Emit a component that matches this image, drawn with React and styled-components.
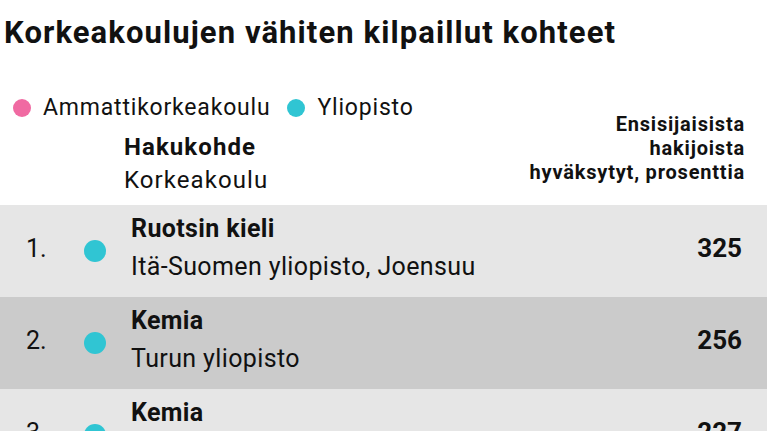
import React from 'react';
import styled, { createGlobalStyle } from 'styled-components';

const GlobalStyle = createGlobalStyle`
  html, body {
    margin: 0;
    padding: 0;
    background: #fff;
    font-family: Roboto, "Liberation Sans", sans-serif;
    color: #111;
  }
`;

const Page = styled.div`
  width: 767px;
  height: 431px;
  overflow: hidden;
`;

const Title = styled.h1`
  margin: 16px 0 0 4px;
  font-size: 31px;
  line-height: 34px;
  font-weight: 700;
  letter-spacing: 0.035em;
  color: #111;
  white-space: nowrap;
`;

const Legend = styled.div`
  display: flex;
  align-items: center;
  gap: 17px;
  margin: 46px 0 0 13px;
  font-size: 23px;
  line-height: 24px;
  letter-spacing: 0.035em;
`;

const LegendItem = styled.div`
  display: flex;
  align-items: center;
  gap: 12px;
`;

const Dot = styled.span`
  display: inline-block;
  flex: none;
  width: ${p => p.size}px;
  height: ${p => p.size}px;
  border-radius: 50%;
  background: ${p => (p.kind === 'amk' ? '#f06aa2' : '#30c5d3')};
`;

const Header = styled.div`
  display: flex;
  justify-content: space-between;
  align-items: flex-end;
  padding: 0 22px 8px 124px;
  margin-top: -8px;
`;

const HeaderLeft = styled.div`
  font-size: 24px;
  line-height: 33px;
  letter-spacing: 0.045em;
`;

const HeaderBold = styled.div`
  font-weight: 700;
`;

const HeaderRight = styled.div`
  text-align: right;
  font-size: 20px;
  line-height: 24px;
  font-weight: 700;
  letter-spacing: 0.04em;
  padding-bottom: 13px;
`;

const Row = styled.div`
  display: grid;
  grid-template-columns: 58px 22px 1fr auto;
  align-items: center;
  height: 92px;
  padding: 0 25px 0 26px;
  background: ${p => (p.dark ? '#cbcbcb' : '#e6e6e6')};
`;

const Rank = styled.div`
  font-size: 25px;
  margin-bottom: 6px;
`;

const Info = styled.div`
  padding-left: 25px;
  font-size: 25px;
  line-height: 38px;
  letter-spacing: 0.015em;
  margin-top: -6px;
  white-space: nowrap;
`;

const Name = styled.div`
  font-weight: 700;
`;

const Value = styled.div`
  font-size: 26px;
  font-weight: 700;
  margin-bottom: 6px;
`;

const rows = [
  { rank: 1, name: 'Ruotsin kieli', school: 'Itä-Suomen yliopisto, Joensuu', value: 325 },
  { rank: 2, name: 'Kemia', school: 'Turun yliopisto', value: 256 },
  { rank: 3, name: 'Kemia', school: 'Jyväskylän yliopisto', value: 227 },
];

export default function App() {
  return (
    <Page>
      <GlobalStyle />
      <Title>Korkeakoulujen vähiten kilpaillut kohteet</Title>
      <Legend>
        <LegendItem>
          <Dot kind="amk" size={18} />
          Ammattikorkeakoulu
        </LegendItem>
        <LegendItem>
          <Dot kind="yo" size={18} />
          Yliopisto
        </LegendItem>
      </Legend>
      <Header>
        <HeaderLeft>
          <HeaderBold>Hakukohde</HeaderBold>
          <div>Korkeakoulu</div>
        </HeaderLeft>
        <HeaderRight>
          Ensisijaisista
          <br />
          hakijoista
          <br />
          hyväksytyt, prosenttia
        </HeaderRight>
      </Header>
      {rows.map((r, i) => (
        <Row key={r.rank} dark={i % 2 === 1}>
          <Rank>{r.rank}.</Rank>
          <Dot kind="yo" size={22} />
          <Info>
            <Name>{r.name}</Name>
            <div>{r.school}</div>
          </Info>
          <Value>{r.value}</Value>
        </Row>
      ))}
    </Page>
  );
}
